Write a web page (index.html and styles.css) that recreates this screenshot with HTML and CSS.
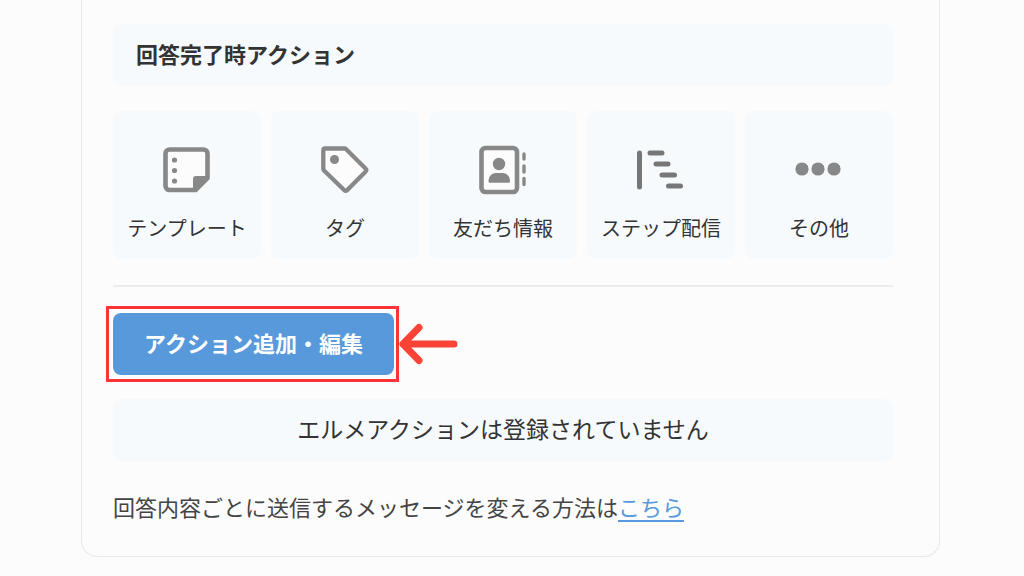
FILE: index.html
```html
<!DOCTYPE html>
<html lang="ja">
<head>
  <meta charset="UTF-8">
  <meta name="viewport" content="width=device-width, initial-scale=1">
  <title>回答完了時アクション</title>
  <link rel="stylesheet" href="styles.css">
</head>
<body>
  <main class="card">
    <h2 class="section-title">回答完了時アクション</h2>

    <div class="action-list">
      <button type="button" class="action">
        <svg class="icon" viewBox="0 0 50 50" aria-hidden="true">
          <path d="M7.500 4.500h34a4 4 0 0 1 4 4V33L33.500 45h-26a4 4 0 0 1-4-4V8.500a4 4 0 0 1 4-4z" fill="#fcfcfc" stroke="#888" stroke-width="4.600" stroke-linejoin="round"/>
          <path d="M45 31H34a3 3 0 0 0-3 3v11h4l10-10z" fill="#888"/>
          <g fill="#888"><circle cx="12.500" cy="15" r="2.600"/><circle cx="12.500" cy="25.500" r="2.600"/><circle cx="12.500" cy="36" r="2.600"/></g>
        </svg>
        <span>テンプレート</span>
      </button>
      <button type="button" class="action">
        <svg class="icon" viewBox="0 0 50 50" aria-hidden="true">
          <path d="M5 3.500h19.500q1 0 1.700.7l19.300 19.300q1.600 1.600 0 3.200L27.300 45q-1.600 1.600-3.200 0L4 25.500q-.7-.7-.7-1.700V5.200q0-1.700 1.700-1.700z" fill="#fcfcfc" stroke="#888" stroke-width="4.300"/>
          <circle cx="14.500" cy="14.500" r="4.500" fill="#888"/>
        </svg>
        <span>タグ</span>
      </button>
      <button type="button" class="action">
        <svg class="icon" viewBox="0 0 50 50" aria-hidden="true">
          <rect x="3.500" y="3" width="35.500" height="44" rx="4" fill="#fcfcfc" stroke="#888" stroke-width="4.600"/>
          <circle cx="21" cy="19" r="6.200" fill="#888"/>
          <path d="M10.500 36.500c0-5.500 3.500-8.500 7.500-8.500h6.500c4 0 7.500 3 7.500 8.500q0 1.200-1.200 1.200H11.700q-1.200 0-1.200-1.200z" fill="#888"/>
          <path d="M46 9v5M46 21v6M46 33.500v6" stroke="#888" stroke-width="3.400" stroke-linecap="round"/>
        </svg>
        <span>友だち情報</span>
      </button>
      <button type="button" class="action">
        <svg class="icon" viewBox="0 0 50 50" aria-hidden="true">
          <path d="M3.500 8v34M14 8H26M20 19H32M26 30H38.500M32.500 41H44.500" fill="none" stroke="#777" stroke-width="5" stroke-linecap="round"/>
        </svg>
        <span>ステップ配信</span>
      </button>
      <button type="button" class="action">
        <svg class="icon" viewBox="0 0 50 50" aria-hidden="true">
          <g fill="#888"><circle cx="8" cy="24" r="6.600"/><circle cx="24" cy="24" r="6.600"/><circle cx="40" cy="24" r="6.600"/></g>
        </svg>
        <span>その他</span>
      </button>
    </div>

    <hr class="divider">

    <div class="edit-row">
      <div class="edit-frame">
        <button type="button" class="edit-button">アクション追加・編集</button>
      </div>
      <svg class="arrow" viewBox="0 0 60 44" aria-hidden="true">
        <path d="M55 22H4M20 5.500L4 22l16 16.500" fill="none" stroke="#f94337" stroke-width="7" stroke-linecap="round" stroke-linejoin="round"/>
      </svg>
    </div>

    <p class="message">エルメアクションは登録されていません</p>

    <p class="note">回答内容ごとに送信するメッセージを変える方法は<a href="#">こちら</a></p>
  </main>
</body>
</html>
```
FILE: styles.css
```css
* {
  box-sizing: border-box;
}

body {
  margin: 0;
  padding: 0 84px 0 81px;
  font-family: "Noto Sans CJK JP", sans-serif;
  background: #fcfcfc;
  color: #333;
}

button {
  border: 0;
  font-family: inherit;
  cursor: pointer;
}

.card {
  padding: 24px 46px 34px 31px;
  border: 1px solid #e8e8e8;
  border-top: 0;
  border-radius: 0 0 16px 16px;
}

.section-title {
  margin: 0 0 25px;
  padding: 13px 23px 17px;
  border-radius: 8px;
  background: #f7fafd;
  font-size: 22px;
  line-height: 32px;
}

.action-list {
  display: grid;
  grid-template-columns: repeat(5, 1fr);
  gap: 10px;
}

.action {
  display: flex;
  flex-direction: column;
  align-items: center;
  gap: 17px;
  padding: 34px 0 15px;
  border-radius: 8px;
  background: #f7fafd;
  color: #333;
  font-size: 20px;
  line-height: 32px;
  white-space: nowrap;
}

.icon {
  width: 50px;
  height: 50px;
}

.divider {
  margin: 26px 0 19px;
  border: 0;
  border-top: 2px solid #ececec;
}

.edit-row {
  display: flex;
  align-items: center;
  margin-left: -7px;
}

.edit-frame {
  padding: 4px 2px 4px 4px;
  border: 3px solid #ff3535;
  background: #fff;
}

.edit-button {
  padding: 13px 31px 17px;
  border-radius: 8px;
  background: #5899db;
  color: #fff;
  font-size: 22px;
  font-weight: bold;
  line-height: 32px;
}

.arrow {
  width: 60px;
  height: 44px;
}

.message {
  margin: 17px 0 29px;
  padding: 13px 15px 17px;
  border-radius: 8px;
  background: #f7fafd;
  font-size: 23px;
  line-height: 32px;
  text-align: center;
}

.note {
  margin: 0;
  color: #444;
  font-size: 22px;
  line-height: 32px;
}

.note a {
  color: #5899db;
  text-underline-offset: 4px;
  text-decoration-thickness: 2px;
}
```
